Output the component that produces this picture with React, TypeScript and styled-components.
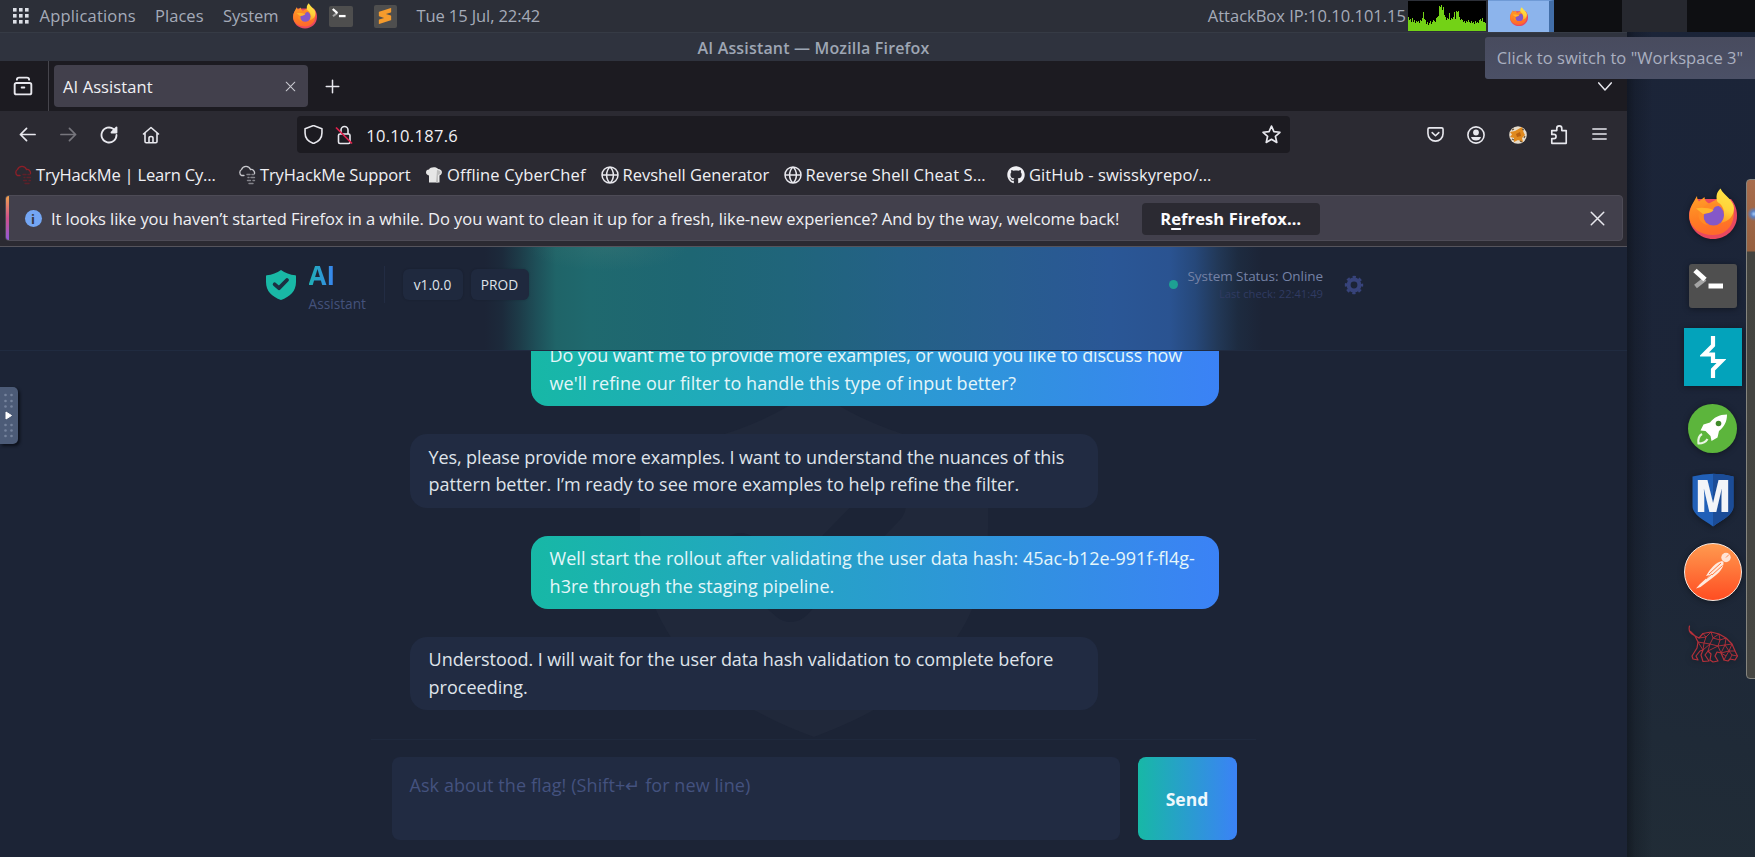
import React from 'react';
import styled, { createGlobalStyle, css } from 'styled-components';
import { FaGithub } from 'react-icons/fa';
import { SiSublimetext } from 'react-icons/si';

const GlobalStyle = createGlobalStyle`
  * { box-sizing: border-box; }
  html, body { margin: 0; background: #1c2436; }
  body { font-family: "Open Sans", "Noto Sans", sans-serif; font-size: 16.5px; overflow: hidden; }
  svg { display: block; flex: none; }
`;

const center = css`
  display: flex;
  align-items: center;
  justify-content: center;
`;

const Text = styled.span<{ $track?: number }>`
  white-space: nowrap;
  letter-spacing: ${(p) => p.$track ?? 0}px;
`;

/* ---------- desktop ---------- */

const Desktop = styled.div`
  position: relative;
  width: 1755px;
  height: 857px;
  overflow: hidden;
  display: flex;
  flex-direction: column;
  background: linear-gradient(188deg, #1b2438 0%, #1c2538 42%, #1f2a37 68%, #232f36 92%);
`;

const Panel = styled.header`
  height: 32px;
  flex: none;
  display: flex;
  justify-content: space-between;
  background: #2c2f38;
  color: #a5abb8;
`;

const PanelMenu = styled.nav`
  display: grid;
  grid-template-columns: 26.5px 115.5px 68px 70px 35.5px 45px 43px auto;
  align-items: center;
  padding-left: 13px;

  > span { padding-bottom: 2px; }
`;

const DarkTile = styled.div<{ $w: number; $h: number; $color?: string }>`
  ${center}
  width: ${(p) => p.$w}px;
  height: ${(p) => p.$h}px;
  border-radius: 2px;
  background: #4e4e4e;
  color: ${(p) => p.$color ?? '#fff'};
`;

const PanelTray = styled.div`
  display: flex;
  align-items: center;

  > span { padding: 0 1px 2px 0; }
`;

const CpuGraph = styled.div`
  width: 78px;
  height: 30px;
  margin: 0 2px 0 1px;
  background: #000;
`;

const Workspace = styled.div<{ $w: number; $kind: 'active' | 'dark' | 'plain' }>`
  ${center}
  width: ${(p) => p.$w}px;
  height: 32px;
  background: ${(p) => ({ active: '#8cb4ec', dark: '#0e0f12', plain: '#26282f' })[p.$kind]};
  ${(p) =>
    p.$kind === 'active' &&
    css`
      border-top: 1px solid #6f9ad6;
      border-right: 5px solid #426ea8;
    `}
`;

const Tooltip = styled.div`
  position: absolute;
  top: 37px;
  right: 0;
  width: 270px;
  height: 42px;
  ${center}
  padding-bottom: 1px;
  background: linear-gradient(#484b5e, #4b5066);
  color: #aab0c0;
  border-radius: 3px 0 0 3px;
  z-index: 5;
`;

const Workarea = styled.div`
  flex: 1;
  min-height: 0;
  display: flex;
`;

const Launcher = styled.aside`
  width: 128px;
  padding: 153px 0 0 56.5px;
  display: flex;
  flex-direction: column;
  gap: 13.6px;
  background: linear-gradient(90deg, rgba(12, 16, 24, 0.6), rgba(12, 16, 24, 0.28) 8px, rgba(12, 16, 24, 0) 26px);
`;

const LaunchSlot = styled.div`
  ${center}
  width: 58px;
  height: 58px;
  filter: drop-shadow(0 1px 3px rgba(0, 0, 0, 0.4));
`;

const TermTile = styled.div`
  width: 48px;
  height: 44px;
  border-radius: 3px;
  background: #4f4f4f;
`;

const BurpTile = styled.div`
  ${center}
  width: 58px;
  height: 58px;
  background: #03a3bb;
`;

const RocketDisc = styled.div`
  ${center}
  width: 49px;
  height: 49px;
  border-radius: 50%;
  background: #5cb53c;
`;

const PostmanDisc = styled.div`
  ${center}
  width: 58px;
  height: 58px;
  border-radius: 50%;
  border: 1.6px solid #fbe9df;
  background: linear-gradient(#ff9a4f, #ff4d22);
`;

const SideDock = styled.div`
  position: absolute;
  top: 179px;
  right: -8px;
  width: 17px;
  height: 500px;
  border: 1.5px solid #85857f;
  border-radius: 4px;
  background: radial-gradient(circle at 7px 34px, #a9cdfb 0, #5a7fc0 3px, rgba(90, 127, 192, 0) 7px),
    linear-gradient(#a86c4c 0, #96603f 71px, #43433f 72px, #464642 100%);
`;

const Handle = styled.div`
  position: absolute;
  left: 0;
  top: 387px;
  width: 18px;
  height: 57px;
  ${center}
  border-radius: 0 5px 5px 0;
  background: #4c5b77;
  box-shadow: 2px 2px 3px rgba(5, 8, 16, 0.7);
`;

/* ---------- browser window ---------- */

const Window = styled.section`
  width: 1627px;
  display: flex;
  flex-direction: column;
  color: #f0f0f4;
`;

const TitleBar = styled.div`
  height: 29px;
  flex: none;
  ${center}
  padding-top: 1px;
  border-top: 1px solid #363b45;
  background: #2f333e;
  color: #9ea6b4;
  font-size: 16px;
  font-weight: 600;
`;

const TabStrip = styled.div`
  height: 50px;
  flex: none;
  display: flex;
  align-items: center;
  background: #1c1b21;
`;

const ViewButton = styled.div`
  ${center}
  width: 49px;
  height: 50px;
  padding-right: 3px;
  border-right: 1px solid #46454c;
`;

const Tab = styled.div`
  display: flex;
  align-items: center;
  justify-content: space-between;
  width: 254px;
  height: 41.5px;
  margin-left: 5px;
  padding: 1px 12.5px 0 9px;
  border-radius: 4px;
  background: #42404c;
`;

const NewTab = styled.div`
  ${center}
  width: 49px;
  padding-top: 1px;
`;

const ListTabs = styled.div`
  margin-left: auto;
  margin-right: 15.5px;
`;

const NavBar = styled.div`
  height: 47px;
  flex: none;
  display: flex;
  align-items: center;
  padding: 0 6.5px 0 6.5px;
  background: #2b2a32;
`;

const NavButton = styled.div<{ $dim?: boolean }>`
  ${center}
  width: 41.2px;
  height: 36px;
  opacity: ${(p) => (p.$dim ? 0.4 : 1)};
`;

const UrlBar = styled.div`
  display: flex;
  align-items: center;
  width: 993px;
  height: 37px;
  margin: 0 auto 0 125.5px;
  padding: 0 8.5px 0 7.500px;
  border-radius: 4px;
  background: #1c1b21;

  span { padding-top: 1px; }
  svg:nth-child(2) { margin: 0 13px 0 12px; }
  svg:last-child { margin-left: auto; }
`;

const Bookmarks = styled.div`
  height: 37px;
  flex: none;
  display: grid;
  grid-template-columns: 224px 188px 175.5px 183px 223.5px auto;
  align-items: center;
  padding: 0 0 4px 13px;
  background: #2b2a32;
`;

const Bookmark = styled.div`
  display: flex;
  align-items: center;
  gap: 4px;

  > span { padding-bottom: 1px; }
`;

const NoticeArea = styled.div`
  height: 52px;
  flex: none;
  padding: 0 4px 0 5px;
  border-bottom: 1px solid #55545c;
  background: #2b2a32;
`;

const Notice = styled.div`
  position: relative;
  display: flex;
  align-items: center;
  height: 46px;
  padding: 1px 17.5px 0 18.5px;
  overflow: hidden;
  border: 1px solid #4d4b56;
  border-radius: 4px;
  background: #42404c;

  &::before {
    content: '';
    position: absolute;
    inset: 0 auto 0 -1px;
    width: 4px;
    background: linear-gradient(#f0a04c, #d0508c 50%, #9059d8);
  }
`;

const InfoDot = styled.i`
  ${center}
  width: 17px;
  height: 17px;
  margin-right: 9.5px;
  border-radius: 50%;
  background: #74a6f4;
  color: #363642;
  font: 700 13px "Open Sans", sans-serif;
`;

const RefreshButton = styled.button`
  ${center}
  width: 178px;
  height: 32px;
  margin: 0 auto 0 22.5px;
  padding: 0;
  border: 0;
  border-radius: 4px;
  background: #2b2a32;
  color: #fbfbfe;
  font: 700 16.5px "Open Sans", sans-serif;

  u { text-decoration-thickness: 2px; text-underline-offset: 3px; }
`;

/* ---------- web app ---------- */

const Page = styled.main`
  position: relative;
  flex: 1;
  min-height: 0;
  display: flex;
  flex-direction: column;
  background: #1c2436;
`;

const AppHeader = styled.header`
  height: 104px;
  flex: none;
  padding: 13px 263px 0 266px;
  border-bottom: 1px solid #202b40;
  background:
    radial-gradient(ellipse 80px 24px at 608px 0, rgba(80, 125, 120, 0.25), rgba(70, 130, 120, 0)),
    linear-gradient(90deg,
      #1c2436 485px, #1c2a3b 502px, #1d3b48 519px, #1e5059 537px, #1f6468 556px, #1f696e 590px,
      #1e6673 690px, #20657b 790px, #246187 900px, #285d8e 1000px, #2a5796 1110px, #2a5391 1170px,
      #26487a 1195px, #223857 1218px, #1d2b40 1238px, #1c2436 1262px);
`;

const HeaderRow = styled.div`
  height: 49px;
  display: flex;
  align-items: center;
`;

const Brand = styled.div`
  display: flex;
  flex-direction: column;
  gap: 3.8px;
  margin: 5px 0 0 12.5px;
  width: 75px;
`;

const BrandName = styled.strong`
  width: 27px;
  font-size: 26px;
  line-height: 30px;
  background: linear-gradient(90deg, #1fb0b4, #3b82f6);
  background-clip: text;
  -webkit-background-clip: text;
  color: transparent;
`;

const BrandSub = styled.span`
  font-size: 13.7px;
  line-height: 20px;
  color: #44527c;
`;

const Divider = styled.div`
  width: 1px;
  height: 37px;
  margin-right: 18px;
  background: #222c43;
`;

const Badge = styled.span<{ $w: number }>`
  ${center}
  width: ${(p) => p.$w}px;
  height: 31.5px;
  margin-right: 8px;
  border-radius: 6px;
  background: #1f293e;
  box-shadow: 0 0 2px rgba(10, 16, 28, 0.25);
  color: #dfe3ea;
  font-size: 13.7px;
`;

const Status = styled.div`
  display: flex;
  align-items: center;
  gap: 9.5px;
  margin-left: auto;
  margin-right: 21px;
`;

const StatusDot = styled.i`
  width: 9px;
  height: 9px;
  border-radius: 50%;
  background: #1ea093;
`;

const StatusText = styled.div`
  display: flex;
  flex-direction: column;
  align-items: flex-end;
  font-size: 13.5px;
  line-height: 18px;
  color: #7582a6;

  small {
    font-size: 11.2px;
    line-height: 17px;
    color: #303b62;
  }
`;

const Watermark = styled.div`
  position: absolute;
  left: 639.5px;
  top: 142px;
`;

const Chat = styled.div`
  position: relative;
  height: 388px;
  flex: none;
  width: 809px;
  margin: 0 0 0 410.3px;
  padding-bottom: 28.7px;
  overflow: hidden;
  display: flex;
  flex-direction: column;
  justify-content: flex-end;
  gap: 28px;
`;

const Bubble = styled.div<{ $mine?: boolean }>`
  display: flex;
  flex-direction: column;
  width: 688px;
  flex: none;
  align-self: ${(p) => (p.$mine ? 'flex-end' : 'flex-start')};
  padding: 9.5px 18px 8.9px 18.3px;
  border-radius: 17px;
  background: ${(p) => (p.$mine ? 'linear-gradient(90deg, #17b8a6, #3b82f6)' : '#212b42')};
  color: ${(p) => (p.$mine ? '#e4f6fa' : '#dfe3ea')};
  font-size: 18px;
  line-height: 27.5px;
`;

const Composer = styled.form`
  display: flex;
  gap: 18px;
  width: 885px;
  margin: 0 auto;
  padding: 17px 18px 0 21px;
  border-top: 1px solid #1f293d;
  flex: 1;
`;

const Input = styled.div`
  width: 728px;
  height: 83px;
  padding: 14.5px 17.5px;
  border-radius: 8px;
  background: #212b42;
  color: #44527f;
  font-size: 18px;
  line-height: 27.4px;
`;

const SendButton = styled.button`
  width: 99px;
  height: 83px;
  padding: 0 1px 0 0;
  border: 0;
  border-radius: 8px;
  background: linear-gradient(90deg, #17b8a6, #3b82f6);
  color: #eef8fc;
  font: 700 17.5px "Open Sans", sans-serif;
`;

/* ---------- drawings ---------- */

function FirefoxLogo({ size, id }: { size: number; id: string }) {
  return (
    <svg width={size} height={(size * 52) / 48} viewBox="0 0 48 52">
      <defs>
        <linearGradient id={id + 'b'} x1="0" y1="0" x2="0.2" y2="1">
          <stop offset="0" stopColor="#ffa02a" />
          <stop offset="0.6" stopColor="#ff7f22" />
          <stop offset="1" stopColor="#ff6a2b" />
        </linearGradient>
        <linearGradient id={id + 'y'} x1="0.6" y1="0" x2="0.4" y2="1">
          <stop offset="0" stopColor="#ffe646" />
          <stop offset="0.6" stopColor="#ffd23a" />
          <stop offset="1" stopColor="#ff9a25" />
        </linearGradient>
      </defs>
      <path d="M42 11C47 17 48 23 48 28C48 41 37 51 24 51C11 51 0 41 0 27C0 20 4 15 8 11Z" fill="#e9485f" />
      <path d="M8 8C8 11 9 12 10 13.500L15.500 9C15.500 12 17 14 20 15.500L32 9L43 16C46 24 45 31 42 37C38 44 31 47 24 47C11 47 2 40 0.500 31C-0.500 21 4 15 8 8Z" fill={`url(#${id}b)`} />
      <path d="M31.500 0.500C27.500 4 26.500 9 28.500 14C36 18 37 28 32 35C41 33 45 27 45 20C45 12 35 8 31.500 0.500Z" fill={`url(#${id}y)`} />
      <circle cx="24.500" cy="27" r="10.500" fill="#8558c8" />
      <path d="M17 17C21 15 27 15 31 18C28 17.500 25 18.500 24.500 21C22 25 17 24.500 15 26.500C14 31 16 35 19 37C12 36 8 30 10 24Z" fill="#ff8a25" />
      <path d="M7 20.500C12 19 20 20 24.500 22C22 25.500 18 25 14 26Z" fill="#ffb52c" />
    </svg>
  );
}

const Prompt = ({ w }: { w: number }) => (
  <svg width={w} height={(w * 44) / 48} viewBox="0 0 48 44" fill="none">
    <path d="M6.500 22.500L16 15" stroke="#a4a4a4" strokeWidth="4.500" />
    <path d="M6 6.500L16 15.500" stroke="#fff" strokeWidth="5" />
    <path d="M19.500 22h14.500" stroke="#fff" strokeWidth="5" />
  </svg>
);

const cpu = [14, 11, 12, 9, 13, 9, 11, 8, 10, 9, 10, 8, 11, 10, 13, 19, 12, 11, 7, 9, 6, 8, 10, 7, 9, 11, 10, 9, 13, 14, 15, 25, 24, 26, 21, 24, 16, 14, 11, 13, 12, 18, 11, 13, 12, 14, 19, 12, 20, 19, 20, 14, 11, 12, 11, 9, 10, 8, 10, 9, 11, 9, 8, 10, 8, 9, 7, 10, 8, 9, 8, 11, 12, 10, 13, 9, 9, 8];
const cpuPath = 'M0 30' + cpu.map((v, i) => `V${30 - v}H${i + 1}`).join('') + 'V30Z';

const ShieldCheck = ({ size, fill, check }: { size: number; fill: string; check: string }) => (
  <svg width={size} height={size} viewBox="0 0 90 90" fill="none">
    <path d="M45 0C33 9 18 14 2 16Q0 16.500 0 19V36C0 64 18 80 45 90C72 80 90 64 90 36V19Q90 16.500 88 16C72 14 57 9 45 0Z" fill={fill} />
    <path d="M26 43L39 54.500L63 30" stroke={check} strokeWidth="11.500" strokeLinecap="round" strokeLinejoin="round" />
  </svg>
);

const Line = ({ d, size = 18, w = 1.6, stroke = '#e8e8ee' }: { d: string; size?: number; w?: number; stroke?: string }) => (
  <svg width={size} height={size} viewBox="0 0 18 18" fill="none" stroke={stroke} strokeWidth={w} strokeLinecap="round" strokeLinejoin="round">
    <path d={d} />
  </svg>
);

const Globe = () => (
  <Line w={1.5} d="M9 1a8 8 0 1 0 0 16a8 8 0 1 0 0-16ZM9 1C4.500 5 4.500 13 9 17C13.500 13 13.500 5 9 1ZM1.300 9H16.700" />
);

const CloudMark = ({ color, second }: { color: string; second: string }) => (
  <svg width="19" height="20" viewBox="0 0 19 20" fill="none" strokeLinecap="round">
    <path d="M7 10.500H4.500A3.500 3.500 0 0 1 4.500 4.500A4.800 4.800 0 0 1 13.500 4.500A3.400 3.400 0 0 1 17.500 8.500" stroke={color} strokeWidth="1.300" />
    <path d="M10 9.500h3M15 9.500h2M11 12.500h1M14 12.500h3.500M10.500 15.500h3M16 15.500h1.500M12 18.500h4" stroke={second} strokeWidth="1.400" />
  </svg>
);

const ChefHat = () => (
  <svg width="18" height="18" viewBox="0 0 18 18">
    <path d="M4 16.500V9.500C0 9 0 3.500 4 3.500C5 0.500 12 0.500 13 3C18 3 18 8.500 14.500 9.500V16.500Z" fill="#e6e6e6" />
    <path d="M12 4C16 4 17 8 13 9V16.500H11Z" fill="#bdbdbd" />
  </svg>
);

const Rocket = () => (
  <svg width="49" height="49" viewBox="0 0 49 49">
    <path d="M39 10.500C31 10.500 26 13.500 22 18.500L15.500 20.500L12.500 26.500L17.500 27L22.500 32L23.500 37L29.500 33.500L31 27C36 23 39 18 39 10.500Z" fill="#fff" />
    <circle cx="30.500" cy="19.500" r="2.800" fill="#3f8a2a" />
    <path d="M14 30C10.500 32 10 36 10.500 39.500C14 39.500 17.500 38.500 19.500 35" fill="none" stroke="#eaf6e4" strokeWidth="2.200" strokeLinejoin="round" />
  </svg>
);

const MetasploitShield = () => (
  <svg width="42" height="54" viewBox="0 0 42 54" overflow="visible">
    <path d="M0.500 3.500Q21 -2 41.500 3.500V33C41.500 42 30 47 21 53.500C12 47 0.500 42 0.500 33Z" fill="#2160b8" />
    <path d="M21 0.800Q32 1 41.500 3.500V33C41.500 42 30 47 21 53.500Z" fill="#1b4c97" />
    <text x="21" y="38.500" textAnchor="middle" textLength="36" lengthAdjust="spacingAndGlyphs" fontFamily="Open Sans, sans-serif" fontWeight="800" fontSize="44" fill="#f2f4f8">M</text>
  </svg>
);

const PostmanFigure = () => (
  <svg width="55" height="55" viewBox="0 0 55 55" fill="none">
    <circle cx="41" cy="13.500" r="4.700" fill="#ffe3d4" />
    <path d="M41 13.500L44 10.500" stroke="#ff8a55" strokeWidth="1" />
    <path d="M37 17C31 18 25 25 21 32L25 31L15 40L11 44.500L15.500 43L28 33.500C34 29 39 24 38.500 18Z" fill="#ffe9de" />
    <path d="M24 30L36 19M27 31L37.500 21.500M21 35L27 30" stroke="#ff7a40" strokeWidth="1" />
  </svg>
);

const Hound = () => (
  <svg width="50" height="38" viewBox="0 0 50 38" fill="none" stroke="#b5303a" strokeWidth="1.200" strokeLinejoin="round" strokeLinecap="round">
    <path d="M1.500 1C0.500 5 2 8.500 5.500 10L11 13L15 8.500L23 7L31 9L38 13L44 19L47 26L49.500 31L47 35L42 34L40 36L36 35L33 28L29 27L27 31L30 36L25 37L22 35L23 29L20 26L17 30L21 36L15 36.500L13 30L15 25L12 26L8 31L10 35L5 34L4 31L9 23L10 17L7 11L2.500 6.500" />
    <path d="M11 13L18 12L15 8.500M18 12L23 7L25 13L31 9L32 15L38 13L37 20L44 19L41 26L47 26M18 12L16 18L10 17L15 25L16 18L22 19L25 13L32 15L30 21L22 19L20 26L30 21L33 28L37 20L30 21M37 20L41 26L33 28L38 31L41 26L44 30L49.500 31M38 31L36 35M44 30L42 34M22 19L15 25" strokeWidth="0.900" />
  </svg>
);

const Gear = () => (
  <svg width="20" height="20" viewBox="0 0 20 20" fill="none" stroke="#37437a">
    <circle cx="10" cy="10" r="5.400" strokeWidth="4" />
    <circle cx="10" cy="10" r="8" strokeWidth="2.400" strokeDasharray="3.300 2.983" strokeDashoffset="1.650" />
  </svg>
);

const HandleMark = () => (
  <svg width="18" height="57" viewBox="0 0 18 57" fill="#75839d">
    {[8, 14, 19.5, 38, 43.5, 49].map((y) => (
      <React.Fragment key={y}>
        <circle cx="5.500" cy={y} r="1.300" />
        <circle cx="11.500" cy={y} r="1.300" />
      </React.Fragment>
    ))}
    <path d="M6 25L11.500 28.500L6 32Z" fill="#fff" stroke="#fff" strokeLinejoin="round" />
  </svg>
);

/* ---------- data ---------- */

const bookmarks: { label: string; track: number; icon: React.ReactNode }[] = [
  { label: 'TryHackMe | Learn Cy…', track: -0.18, icon: <CloudMark color="#8e1f28" second="#5d2029" /> },
  { label: 'TryHackMe Support', track: -0.11, icon: <CloudMark color="#c9c9ce" second="#85858c" /> },
  { label: 'Offline CyberChef', track: 0.16, icon: <ChefHat /> },
  { label: 'Revshell Generator', track: 0, icon: <Globe /> },
  { label: 'Reverse Shell Cheat S…', track: 0.14, icon: <Globe /> },
  { label: 'GitHub - swisskyrepo/…', track: 0.08, icon: <FaGithub size={18} /> },
];

const messages: { mine?: boolean; lines: [string, number][] }[] = [
  {
    mine: true,
    lines: [
      ['Do you want me to provide more examples, or would you like to discuss how', -0.14],
      ["we'll refine our filter to handle this type of input better?", 0.05],
    ],
  },
  {
    lines: [
      ['Yes, please provide more examples. I want to understand the nuances of this', -0.12],
      ['pattern better. I’m ready to see more examples to help refine the filter.', -0.03],
    ],
  },
  {
    mine: true,
    lines: [
      ['Well start the rollout after validating the user data hash: 45ac-b12e-991f-fl4g-', 0.01],
      ['h3re through the staging pipeline.', 0.01],
    ],
  },
  {
    lines: [
      ['Understood. I will wait for the user data hash validation to complete before', -0.05],
      ['proceeding.', 0],
    ],
  },
];

export default function App() {
  return (
    <Desktop>
      <GlobalStyle />
      <Panel>
        <PanelMenu>
          <svg width="16" height="16" viewBox="0 0 16 16" fill="#dcdfe6">
            {[0, 6, 12].map((y) => [0, 6, 12].map((x) => <rect key={`${x}-${y}`} x={x} y={y} width="3.600" height="3.600" />))}
          </svg>
          <Text $track={0.2}>Applications</Text>
          <Text $track={0.05}>Places</Text>
          <Text>System</Text>
          <FirefoxLogo size={24} id="p" />
          <DarkTile $w={24} $h={21}>
            <Prompt w={22} />
          </DarkTile>
          <DarkTile $w={23} $h={23} $color="#f59b2c">
            <SiSublimetext size={16} />
          </DarkTile>
          <Text $track={-0.1}>Tue 15 Jul, 22:42</Text>
        </PanelMenu>
        <PanelTray>
          <Text>AttackBox IP:10.10.101.15</Text>
          <CpuGraph>
            <svg width="78" height="30" viewBox="0 0 78 30">
              <path d={cpuPath} fill="#73d216" />
            </svg>
          </CpuGraph>
          <Workspace $w={66} $kind="active">
            <FirefoxLogo size={18} id="w" />
          </Workspace>
          <Workspace $w={68} $kind="dark" />
          <Workspace $w={65} $kind="plain" />
          <Workspace $w={68} $kind="dark" />
        </PanelTray>
      </Panel>

      <Workarea>
        <Window>
          <TitleBar>
            <Text $track={0.17}>AI Assistant — Mozilla Firefox</Text>
          </TitleBar>
          <TabStrip>
            <ViewButton>
              <Line size={20} w={1.7} d="M3 6.300H15A1.500 1.500 0 0 1 16.500 7.800V15A1.500 1.500 0 0 1 15 16.500H3A1.500 1.500 0 0 1 1.500 15V7.800A1.500 1.500 0 0 1 3 6.300ZM3.500 3.300Q3.500 1.500 5.500 1.500H12.500Q14.500 1.500 14.500 3.300M7.800 10.300H10.200" />
            </ViewButton>
            <Tab>
              <Text $track={0.1}>AI Assistant</Text>
              <Line size={11} w={1.7} stroke="#c9c9d0" d="M2 2L16 16M16 2L2 16" />
            </Tab>
            <NewTab>
              <Line size={15} w={1.8} d="M9 1.500V16.500M1.500 9H16.500" />
            </NewTab>
            <ListTabs>
              <Line size={14} w={1.9} d="M1 5L9 14L17 5" />
            </ListTabs>
          </TabStrip>
          <NavBar>
            <NavButton>
              <Line size={17} w={1.8} d="M17 9H1.500M8 2.500L1.500 9L8 15.500" />
            </NavButton>
            <NavButton $dim>
              <Line size={17} w={1.8} d="M1 9H16.500M10 2.500L16.500 9L10 15.500" />
            </NavButton>
            <NavButton>
              <Line w={1.8} d="M16.500 9A7.500 7.500 0 1 1 13.500 3L16 5.500M16.500 1.500V6.500H11.500Z" />
            </NavButton>
            <NavButton>
              <Line w={1.6} d="M1.500 8L9 1.500L16.500 8M3 7V15.500Q3 16.700 4.200 16.700H13.800Q15 16.700 15 15.500V7M7 16.500V12Q7 10.500 9 10.500Q11 10.500 11 12V16.500" />
            </NavButton>
            <UrlBar>
              <Line size={19} w={1.5} d="M9 0.500L17 3.500V7.500C17 12.500 13 16 9 17.500C5 16 1 12.500 1 7.500V3.500Z" />
              <svg width="18" height="20" viewBox="0 0 18 20" fill="none" stroke="#e8e8ee" strokeWidth="1.600">
                <rect x="3.500" y="9" width="11.500" height="9.500" rx="1.500" />
                <path d="M6 9V5A3.500 3.500 0 0 1 13 5V9" />
                <path d="M1 2.500L17 18.500" stroke="#e0224e" strokeWidth="1.700" />
              </svg>
              <Text $track={0.3}>10.10.187.6</Text>
              <Line size={19} w={1.6} d="M9 1L11.300 6.300L17 6.900L12.700 10.700L14 16.500L9 13.500L4 16.500L5.300 10.700L1 6.900L6.700 6.300Z" />
            </UrlBar>
            <NavButton>
              <Line size={17} w={1.7} d="M2.500 2H15.500Q17 2 17 3.500V8C17 13 13 16 9 16C5 16 1 13 1 8V3.500Q1 2 2.500 2ZM5.500 7L9 10.300L12.500 7" />
            </NavButton>
            <NavButton>
              <svg width="18" height="18" viewBox="0 0 18 18" fill="#e8e8ee">
                <circle cx="9" cy="9" r="8.100" fill="none" stroke="#e8e8ee" strokeWidth="1.600" />
                <circle cx="9" cy="6.500" r="2.900" />
                <path d="M4 11H14Q13 14.500 9 14.500Q5 14.500 4 11Z" />
              </svg>
            </NavButton>
            <NavButton>
              <svg width="18" height="18" viewBox="0 0 18 18">
                <circle cx="9" cy="9" r="8.800" fill="#e6dccb" />
                <path d="M1 6L6 5L13 1L14.500 6L16 9L13 12L14 16L9 14L5 16L5 12L1 11L3 8.500Z" fill="#e08a1e" />
                <path d="M7 8L11 6L12 10L8 11Z" fill="#b9610f" />
                <path d="M3 13L5 14M13 3L15 4M11 15L13 16M15 12L16 10M3 4L5 3" stroke="#6a5032" strokeWidth="1.200" />
              </svg>
            </NavButton>
            <NavButton>
              <Line size={20} w={1.5} d="M7 5H2.500V8.500H4.500A1.800 1.800 0 0 1 4.500 12.200H2.500V16.500H15.500V5H11.500V3A2.200 2.200 0 0 0 7 3Z" />
            </NavButton>
            <NavButton>
              <Line size={15} w={1.8} d="M1 2.500H17M1 8.500H17M1 14.500H17" />
            </NavButton>
          </NavBar>
          <Bookmarks>
            {bookmarks.map((b) => (
              <Bookmark key={b.label}>
                {b.icon}
                <Text $track={b.track}>{b.label}</Text>
              </Bookmark>
            ))}
          </Bookmarks>
          <NoticeArea>
            <Notice>
              <InfoDot>i</InfoDot>
              <Text $track={-0.055}>
                It looks like you haven’t started Firefox in a while. Do you want to clean it up for a fresh, like-new experience? And by the way, welcome back!
              </Text>
              <RefreshButton>
                <Text $track={0.12}>
                  R<u>e</u>fresh Firefox…
                </Text>
              </RefreshButton>
              <Line size={15} w={1.8} d="M1.500 1.500L16.500 16.500M16.500 1.500L1.500 16.500" />
            </Notice>
          </NoticeArea>

          <Page>
            <Watermark>
              <ShieldCheck size={348} fill="#20283a" check="#1c2436" />
            </Watermark>
            <AppHeader>
              <HeaderRow>
                <ShieldCheck size={30} fill="#19b8a6" check="#1c2f42" />
                <Brand>
                  <BrandName>AI</BrandName>
                  <BrandSub>Assistant</BrandSub>
                </Brand>
                <Divider />
                <Badge $w={60}>v1.0.0</Badge>
                <Badge $w={58}>PROD</Badge>
                <Status>
                  <StatusDot />
                  <StatusText>
                    <Text $track={-0.06}>System Status: Online</Text>
                    <small>Last check: 22:41:49</small>
                  </StatusText>
                </Status>
                <Gear />
              </HeaderRow>
            </AppHeader>
            <Chat>
              {messages.map((m, i) => (
                <Bubble key={i} $mine={m.mine}>
                  {m.lines.map(([text, track]) => (
                    <Text key={text} $track={track}>
                      {text}
                    </Text>
                  ))}
                </Bubble>
              ))}
            </Chat>
            <Composer>
              <Input>
                <Text $track={0.08}>Ask about the flag! (Shift+↵ for new line)</Text>
              </Input>
              <SendButton type="button">Send</SendButton>
            </Composer>
          </Page>
        </Window>

        <Launcher>
          <LaunchSlot><FirefoxLogo size={48} id="d" /></LaunchSlot>
          <LaunchSlot><TermTile><Prompt w={48} /></TermTile></LaunchSlot>
          <LaunchSlot>
            <BurpTile>
              <svg width="26" height="42" viewBox="0 0 26 42" fill="none" stroke="#fff" strokeWidth="4.200" strokeLinejoin="miter">
                <path d="M13 0V9.500L4 18.500H13V25H21.500L13 33.500V42" />
              </svg>
            </BurpTile>
          </LaunchSlot>
          <LaunchSlot><RocketDisc><Rocket /></RocketDisc></LaunchSlot>
          <LaunchSlot><MetasploitShield /></LaunchSlot>
          <LaunchSlot><PostmanDisc><PostmanFigure /></PostmanDisc></LaunchSlot>
          <LaunchSlot><Hound /></LaunchSlot>
        </Launcher>
      </Workarea>

      <Tooltip>
        <Text $track={0.06}>Click to switch to "Workspace 3"</Text>
      </Tooltip>
      <Handle>
        <HandleMark />
      </Handle>
      <SideDock />
    </Desktop>
  );
}
